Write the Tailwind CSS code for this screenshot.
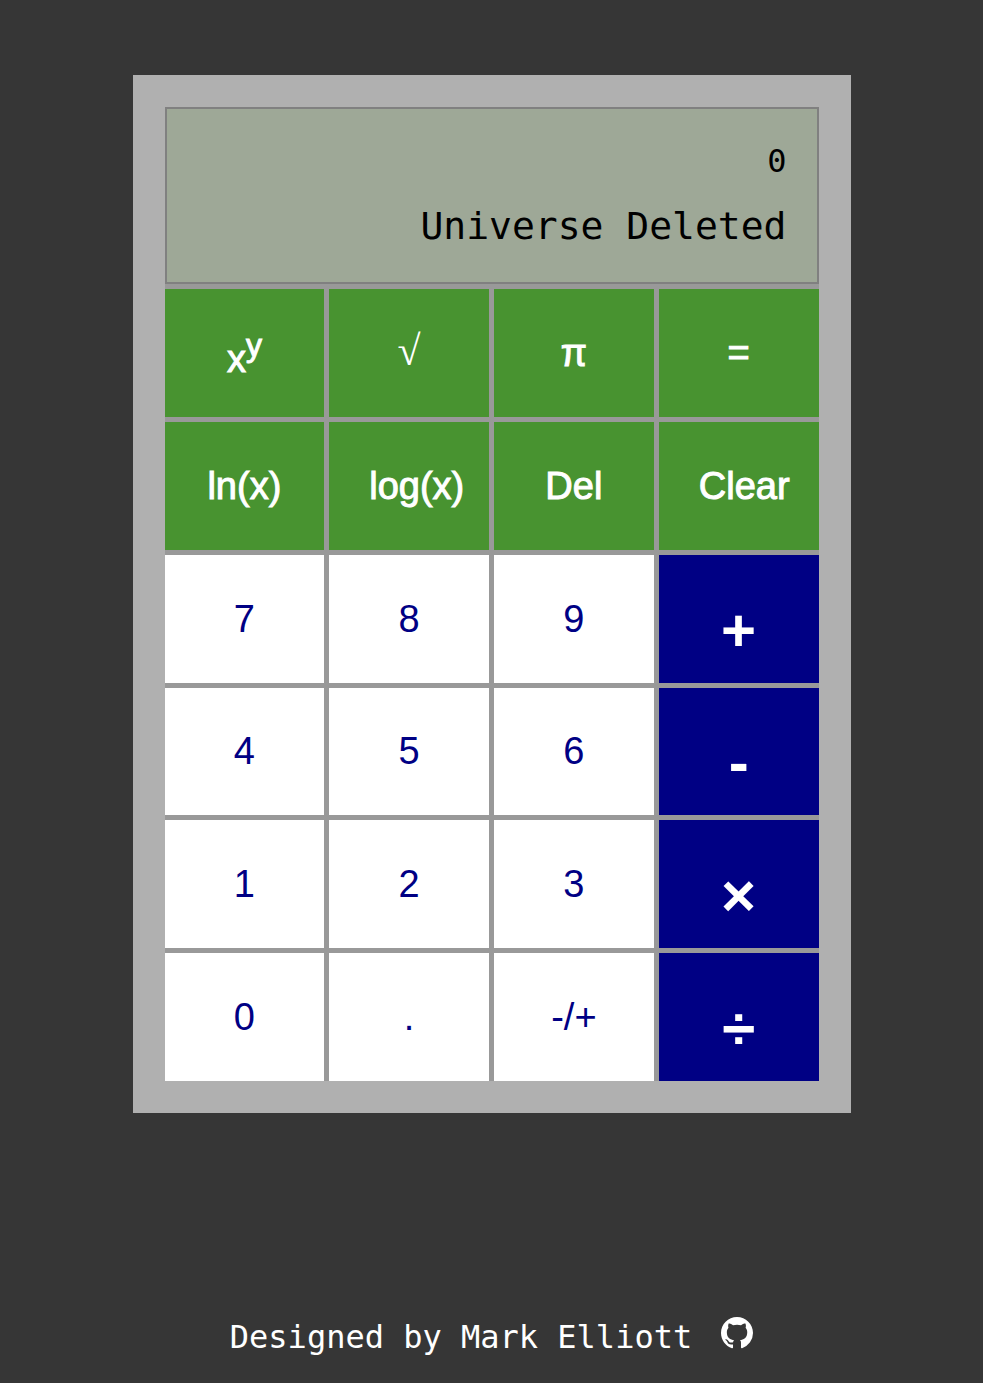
<!DOCTYPE html>
<html lang="en">
<head>
<meta charset="utf-8">
<meta name="viewport" content="width=device-width, initial-scale=1">
<title>Calculator</title>
<script src="https://cdn.jsdelivr.net/npm/@tailwindcss/browser@4"></script>
</head>
<body class="flex min-h-screen flex-col items-center justify-between bg-[#363636] pt-[75px] pb-[26px] font-['Liberation_Sans',Arial,sans-serif]">
<main class="w-full max-w-[718px] bg-[#b0b0b0] p-8">
  <div class="bg-[#999999]">
    <output class="block border-2 border-[#808080] bg-[#9ea897] px-[30px] pt-7 pb-[27px] text-right font-['DejaVu_Sans_Mono',monospace] text-black">
      <span class="block text-[32px] leading-[48px]">0</span>
      <span class="mt-3 block text-[38px] leading-[58px]">Universe Deleted</span>
    </output>
    <div class="mt-[5px] grid min-h-[792px] auto-rows-fr grid-cols-4 gap-[5px] text-[38px] leading-[44px] text-white">
      <button type="button" class="bg-[#489330] px-10 pt-3 whitespace-nowrap [-webkit-text-stroke:1px]">x<sup class="text-[32px]">y</sup></button>
      <button type="button" class="bg-[#489330] px-10 pb-1 font-['Liberation_Serif',serif] text-[42px] whitespace-nowrap">√</button>
      <button type="button" class="bg-[#489330] px-10 whitespace-nowrap [-webkit-text-stroke:1px]">π</button>
      <button type="button" class="bg-[#489330] px-10 whitespace-nowrap [-webkit-text-stroke:1px]">=</button>
      <button type="button" class="bg-[#489330] px-10 whitespace-nowrap [-webkit-text-stroke:1px]">ln(x)</button>
      <button type="button" class="bg-[#489330] px-10 whitespace-nowrap [-webkit-text-stroke:1px]">log(x)</button>
      <button type="button" class="bg-[#489330] px-10 whitespace-nowrap [-webkit-text-stroke:1px]">Del</button>
      <button type="button" class="bg-[#489330] px-10 whitespace-nowrap [-webkit-text-stroke:1px]">Clear</button>
      <button type="button" class="bg-white text-[#000084]">7</button>
      <button type="button" class="bg-white text-[#000084]">8</button>
      <button type="button" class="bg-white text-[#000084]">9</button>
      <button type="button" class="bg-[#000084] pt-6 text-[60px] font-bold">+</button>
      <button type="button" class="bg-white text-[#000084]">4</button>
      <button type="button" class="bg-white text-[#000084]">5</button>
      <button type="button" class="bg-white text-[#000084]">6</button>
      <button type="button" class="bg-[#000084] pt-6 text-[60px] font-bold">-</button>
      <button type="button" class="bg-white text-[#000084]">1</button>
      <button type="button" class="bg-white text-[#000084]">2</button>
      <button type="button" class="bg-white text-[#000084]">3</button>
      <button type="button" class="bg-[#000084] pt-6 text-[60px] font-bold">×</button>
      <button type="button" class="bg-white text-[#000084]">0</button>
      <button type="button" class="bg-white text-[#000084]">.</button>
      <button type="button" class="bg-white text-[#000084]">-/+</button>
      <button type="button" class="bg-[#000084] pt-6 text-[60px] font-bold">÷</button>
    </div>
  </div>
</main>
<footer class="flex items-start gap-[29px] font-['DejaVu_Sans_Mono',monospace] text-[32px] leading-[40px] text-white">
  <span>Designed by Mark Elliott</span>
  <a href="#" aria-label="GitHub">
    <svg class="size-8" viewBox="0 0 16 16" fill="currentColor" aria-hidden="true"><path d="M8 0C3.58 0 0 3.58 0 8c0 3.54 2.29 6.53 5.47 7.59.4.07.55-.17.55-.38 0-.19-.01-.82-.01-1.49-2.01.37-2.53-.49-2.69-.94-.09-.23-.48-.94-.82-1.13-.28-.15-.68-.52-.01-.53.63-.01 1.08.58 1.23.82.72 1.21 1.87.87 2.33.66.07-.52.28-.87.51-1.07-1.78-.2-3.64-.89-3.64-3.95 0-.87.31-1.59.82-2.15-.08-.2-.36-1.02.08-2.12 0 0 .67-.21 2.2.82.64-.18 1.32-.27 2-.27.68 0 1.36.09 2 .27 1.53-1.04 2.2-.82 2.2-.82.44 1.1.16 1.92.08 2.12.51.56.82 1.27.82 2.15 0 3.07-1.87 3.75-3.65 3.95.29.25.54.73.54 1.48 0 1.07-.01 1.93-.01 2.2 0 .21.15.46.55.38A8.013 8.013 0 0016 8c0-4.42-3.58-8-8-8z"/></svg>
  </a>
</footer>
</body>
</html>
